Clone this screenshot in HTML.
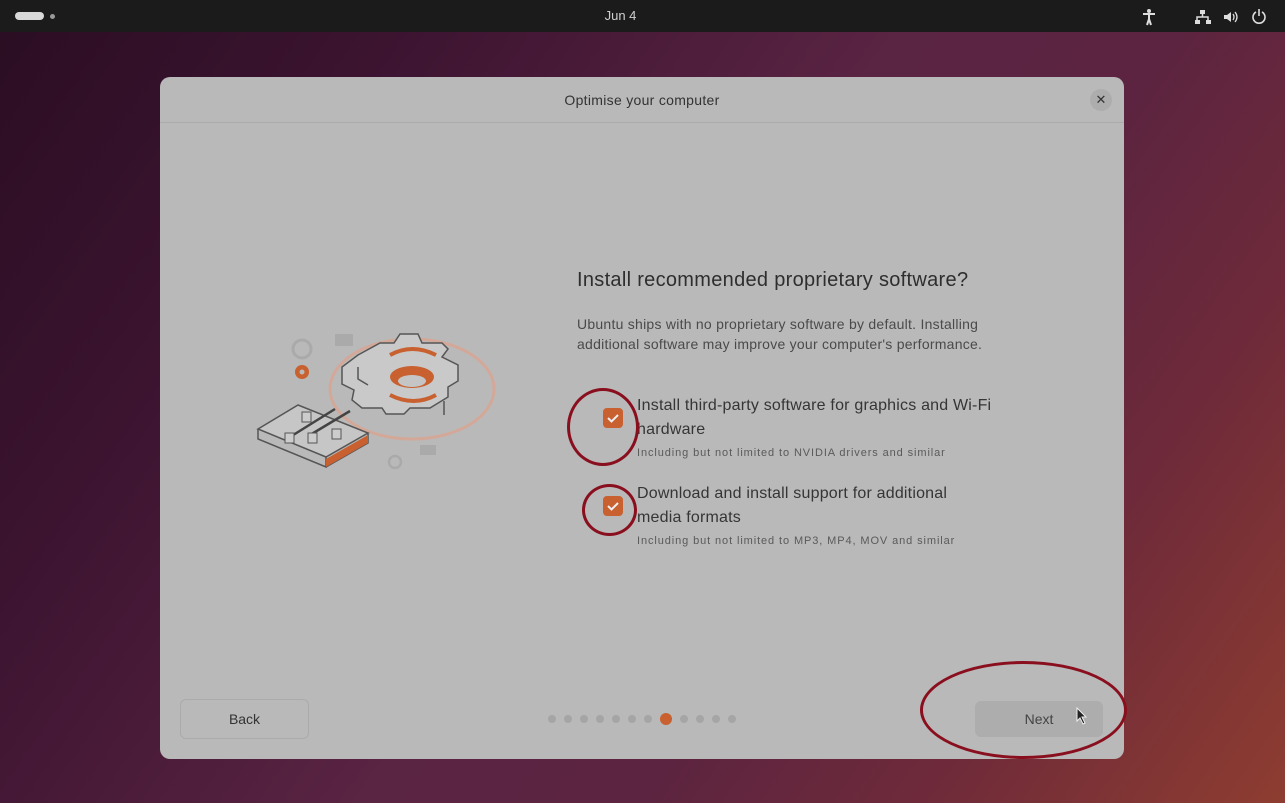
<!DOCTYPE html>
<html><head><meta charset="utf-8"><style>
*{margin:0;padding:0;box-sizing:border-box}
body{width:1285px;height:803px;overflow:hidden;font-family:"Liberation Sans",sans-serif;position:relative;
background:linear-gradient(125deg,#2a0d22 0%,#3e1532 25%,#5a2443 50%,#5c2440 65%,#6e2a3a 80%,#8e3d30 100%);}
.top{position:absolute;left:0;top:0;width:1285px;height:32px;background:#1b1b1b;color:#cfcfcf;font-size:13px}
.dlg{position:absolute;left:160px;top:77px;width:964px;height:682px;background:#b9b9b9;border-radius:10px;overflow:hidden}
.hdr{height:46px;border-bottom:1px solid #ababab;text-align:center;line-height:46px;font-size:14px;color:#333;letter-spacing:0.3px}
.t{position:absolute;color:#353535;white-space:nowrap}
.cb{position:absolute;width:20px;height:20px;border-radius:4px;background:#c8602f}
.ring{position:absolute;border:3px solid #8a0f1e;border-radius:50%}
.dot{position:absolute;top:638px;width:8px;height:8px;border-radius:50%;background:#a5a5a5}
</style></head><body>
<div class="top">
 <div style="position:absolute;left:15px;top:12px;width:29px;height:8px;border-radius:4px;background:#d8d8d8"></div>
 <div style="position:absolute;left:50px;top:14px;width:5px;height:5px;border-radius:50%;background:#999"></div>
 <div style="position:absolute;left:0;width:1241px;text-align:center;top:8px">Jun 4</div>
 <svg style="position:absolute;left:1140px;top:8px" width="130" height="18" viewBox="0 0 130 18" fill="#ddd" stroke="#ddd">
  <circle cx="9" cy="3" r="2" stroke="none"/><path d="M3 6h12M9 6v5M9 11l-2 6M9 11l2 6" stroke-width="2" fill="none"/>
  <rect x="60" y="2" width="5" height="4" stroke="none"/><rect x="55" y="12" width="5" height="4" stroke="none"/><rect x="66" y="12" width="5" height="4" stroke="none"/><path d="M62.5 6v3M57 12V9h11v3" fill="none" stroke-width="1.5"/>
  <path d="M84 7h3l4-3v10l-4-3h-3z" stroke="none"/><path d="M93 6q2 3 0 6M95 4q4 5 0 10" fill="none" stroke-width="1.3"/>
  <path d="M116 4a6 6 0 1 0 6 0" fill="none" stroke-width="1.6"/><path d="M119 1v7" stroke-width="1.6"/>
 </svg>
</div>
<div class="dlg">
 <div class="hdr">Optimise your computer</div>
 <div style="position:absolute;left:930px;top:12px;width:22px;height:22px;border-radius:50%;background:#adadad;text-align:center;line-height:22px;font-size:13px;color:#333">✕</div>
 <svg style="position:absolute;left:90px;top:250px" width="260" height="170" viewBox="0 0 260 170" fill="none">
  <ellipse cx="162" cy="62" rx="82" ry="50" stroke="#d4a898" stroke-width="3"/>
  <rect x="85" y="7" width="18" height="12" fill="#aaa"/>
  <path d="M108 28l22-12h14l6-9h18l4 9h20l6 6-6 8 16 8v16l-10 6v10l-18 11h-20l-6 6h-18l-4-6h-20l-10-8 2-10-12-6V40z" fill="#c9c9c9" stroke="#555" stroke-width="1.5"/>
  <path d="M108 40v12l10 6M194 74v14" stroke="#555" stroke-width="1.5"/>
  <ellipse cx="162" cy="50" rx="22" ry="11" fill="#c8602f"/><ellipse cx="162" cy="54" rx="14" ry="6" fill="#c5c5c5"/>
  <path d="M140 28q22-12 46 0M186 68q-22 12-46 0" stroke="#c8602f" stroke-width="4"/>
  <circle cx="52" cy="45" r="7" fill="#c8602f"/><circle cx="52" cy="45" r="2.5" fill="#b9b9b9"/>
  <circle cx="52" cy="22" r="9" stroke="#aaa" stroke-width="3"/>
  <path d="M8 102l40-24 70 28-42 24z" fill="#c6c6c6" stroke="#555" stroke-width="1.5"/>
  <path d="M8 102v10l68 28v-10M76 140l42-24v-10" stroke="#555" stroke-width="1.5"/>
  <path d="M76 132l42-24v8l-42 24z" fill="#c8602f"/>
  <path d="M40 110l45-28M60 108l40-24" stroke="#444" stroke-width="2.5"/>
  <rect x="52" y="85" width="9" height="10" fill="#ccc" stroke="#555"/><rect x="35" y="106" width="9" height="10" fill="#ccc" stroke="#555"/><rect x="58" y="106" width="9" height="10" fill="#ccc" stroke="#555"/><rect x="82" y="102" width="9" height="10" fill="#ccc" stroke="#555"/>
  <rect x="170" y="118" width="16" height="10" fill="#aaa"/><circle cx="145" cy="135" r="6" stroke="#aaa" stroke-width="2.5"/>
 </svg>
 <div class="t" style="left:417px;top:192px;font-size:20px;letter-spacing:0.3px;color:#2e2e2e">Install recommended proprietary software?</div>
 <div class="t" style="left:417px;top:237px;font-size:14px;line-height:20px;letter-spacing:0.25px;color:#4a4a4a">Ubuntu ships with no proprietary software by default. Installing<br>additional software may improve your computer's performance.</div>
 <div class="cb" style="left:443px;top:331px"><svg width="20" height="20"><path d="M5 10l3.5 3.5L15 7" stroke="#eee" stroke-width="2" fill="none"/></svg></div>
 <div class="t" style="left:477px;top:317px;font-size:16px;line-height:24px;letter-spacing:0.2px">Install third-party software for graphics and Wi-Fi<br>hardware</div>
 <div class="t" style="left:477px;top:370px;font-size:11px;letter-spacing:0.9px;color:#5a5a5a">Including but not limited to NVIDIA drivers and similar</div>
 <div class="cb" style="left:443px;top:419px"><svg width="20" height="20"><path d="M5 10l3.5 3.5L15 7" stroke="#eee" stroke-width="2" fill="none"/></svg></div>
 <div class="t" style="left:477px;top:405px;font-size:16px;line-height:24px;letter-spacing:0.2px">Download and install support for additional<br>media formats</div>
 <div class="t" style="left:477px;top:458px;font-size:11px;letter-spacing:0.9px;color:#5a5a5a">Including but not limited to MP3, MP4, MOV and similar</div>
 <div style="position:absolute;left:20px;top:622px;width:129px;height:40px;border:1px solid #ababab;border-radius:6px;text-align:center;line-height:38px;font-size:14px;color:#333">Back</div>
 <div style="position:absolute;left:815px;top:624px;width:128px;height:36px;background:#adadad;border-radius:6px;text-align:center;line-height:36px;font-size:14px;color:#444">Next</div>
 <div class="dot" style="left:388px"></div><div class="dot" style="left:404px"></div><div class="dot" style="left:420px"></div><div class="dot" style="left:436px"></div><div class="dot" style="left:452px"></div><div class="dot" style="left:468px"></div><div class="dot" style="left:484px"></div>
 <div class="dot" style="left:500px;top:636px;width:12px;height:12px;background:#c8602f"></div>
 <div class="dot" style="left:520px"></div><div class="dot" style="left:536px"></div><div class="dot" style="left:552px"></div><div class="dot" style="left:568px"></div>
</div>
<div class="ring" style="left:567px;top:388px;width:72px;height:78px"></div>
<div class="ring" style="left:582px;top:484px;width:55px;height:52px"></div>
<div class="ring" style="left:920px;top:661px;width:207px;height:98px"></div>
<svg style="position:absolute;left:1076px;top:707px" width="12" height="18"><path d="M1 1v13l3-3 3 6 2-1-3-6h4z" fill="#222" stroke="#eee" stroke-width="1"/></svg>
</body></html>
